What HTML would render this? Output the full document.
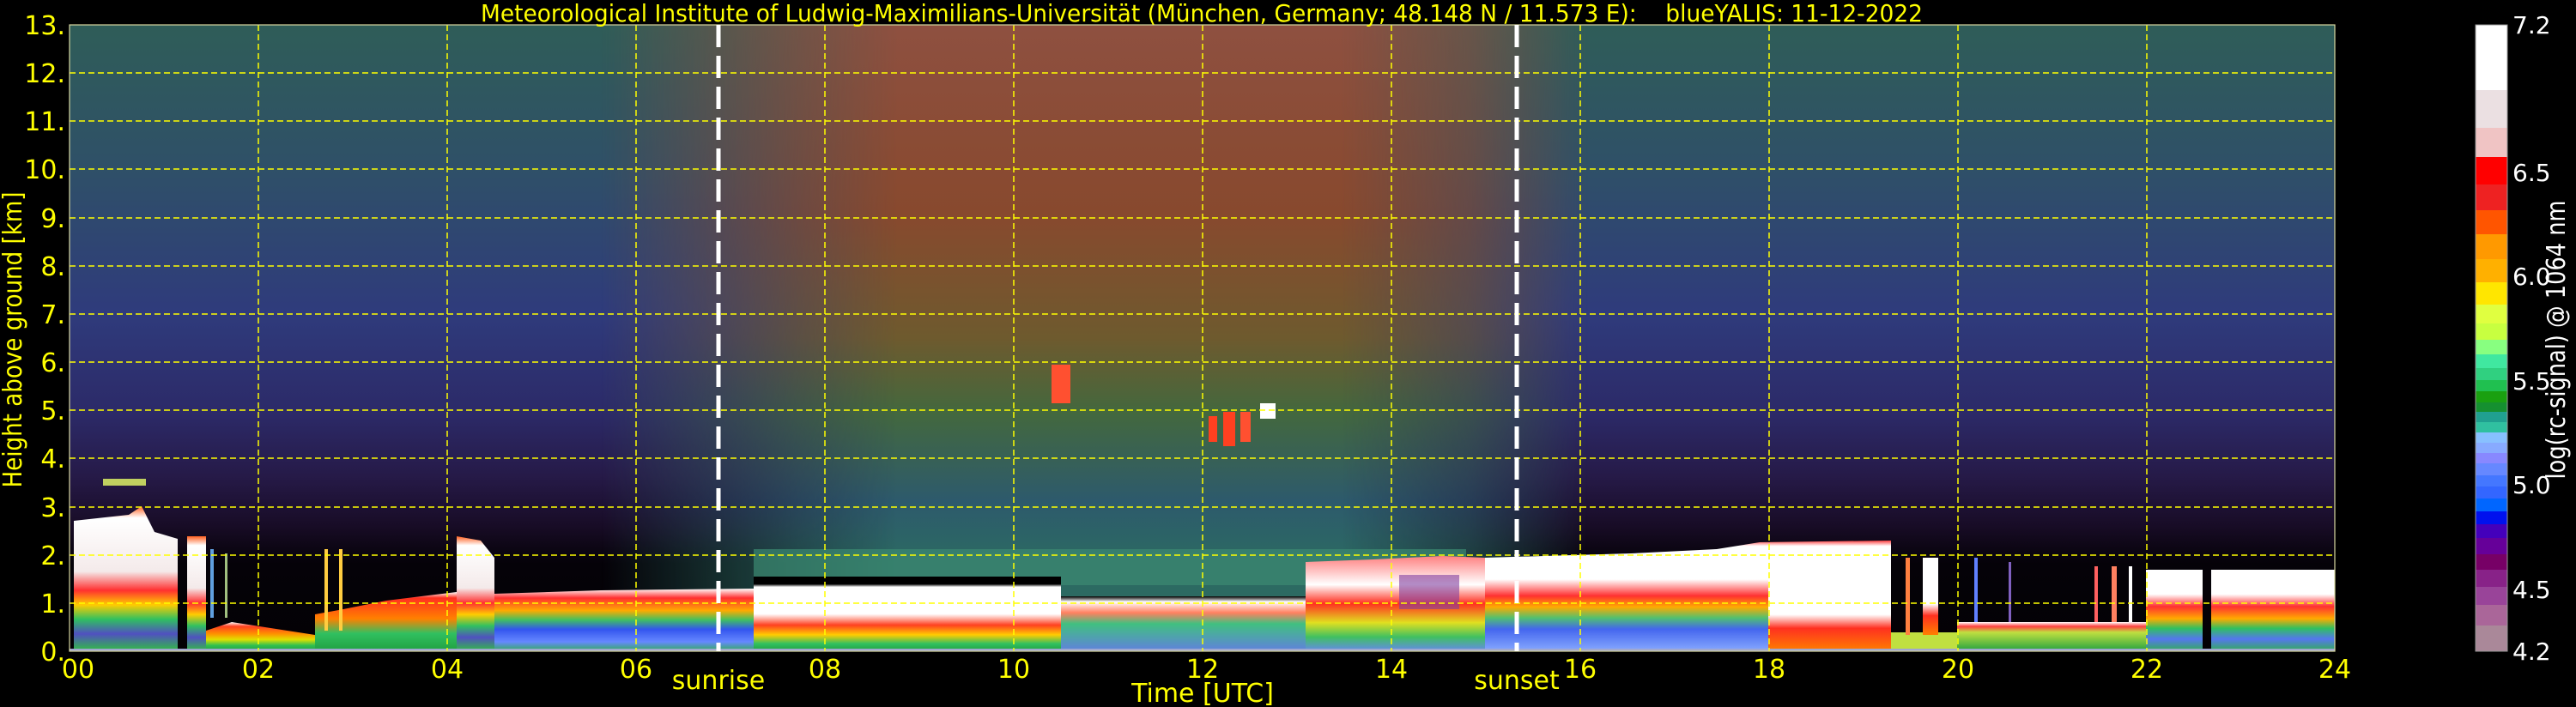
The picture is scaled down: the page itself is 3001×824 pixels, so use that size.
<!DOCTYPE html>
<html><head><meta charset="utf-8"><style>
html,body{margin:0;padding:0;background:#000;}
svg{display:block;}
text{font-family:"DejaVu Sans","Liberation Sans",sans-serif;}
</style></head><body>
<svg width="3001" height="824" viewBox="0 0 3001 824" xmlns="http://www.w3.org/2000/svg">
<defs>
<linearGradient id="night" x1="0" y1="29" x2="0" y2="759" gradientUnits="userSpaceOnUse">
<stop offset="0" stop-color="#2f5d58"/><stop offset="0.23" stop-color="#2f5068"/>
<stop offset="0.46" stop-color="#2f3b7c"/><stop offset="0.62" stop-color="#2c2a68"/>
<stop offset="0.72" stop-color="#261a48"/><stop offset="0.8" stop-color="#180c26"/>
<stop offset="0.86" stop-color="#050208"/><stop offset="1" stop-color="#030104"/>
</linearGradient>
<linearGradient id="day" x1="0" y1="29" x2="0" y2="759" gradientUnits="userSpaceOnUse">
<stop offset="0" stop-color="#8e5040"/><stop offset="0.3" stop-color="#88492e"/>
<stop offset="0.5" stop-color="#6e5a2e"/><stop offset="0.62" stop-color="#43683e"/>
<stop offset="0.76" stop-color="#2d5a6c"/><stop offset="0.86" stop-color="#2c6a62"/>
<stop offset="1" stop-color="#2c6a62"/>
</linearGradient>
<linearGradient id="fade" x1="0" y1="0" x2="1" y2="0">
<stop offset="0" stop-color="#fff" stop-opacity="0"/><stop offset="0.2" stop-color="#fff" stop-opacity="0.7"/>
<stop offset="0.3" stop-color="#fff" stop-opacity="1"/><stop offset="0.75" stop-color="#fff" stop-opacity="1"/>
<stop offset="0.88" stop-color="#fff" stop-opacity="0.6"/><stop offset="1" stop-color="#fff" stop-opacity="0"/>
</linearGradient>
<mask id="dm"><rect x="700" y="29" width="1150" height="730" fill="url(#fade)"/></mask>
<linearGradient id="gCloud" x1="0" y1="0" x2="0" y2="1">
<stop offset="0" stop-color="#ff6020"/><stop offset="0.08" stop-color="#ffffff"/>
<stop offset="0.45" stop-color="#f4eaea"/><stop offset="0.58" stop-color="#ff3030"/>
<stop offset="0.68" stop-color="#ffcc00"/><stop offset="0.78" stop-color="#30c060"/>
<stop offset="0.88" stop-color="#5050c0"/><stop offset="1" stop-color="#30c040"/>
</linearGradient>
<linearGradient id="gLow" x1="0" y1="0" x2="0" y2="1">
<stop offset="0" stop-color="#ffffff"/><stop offset="0.15" stop-color="#ff4020"/>
<stop offset="0.4" stop-color="#ff9000"/><stop offset="0.6" stop-color="#e0e000"/>
<stop offset="0.8" stop-color="#30c050"/><stop offset="1" stop-color="#20a040"/>
</linearGradient>
<linearGradient id="gMid" x1="0" y1="0" x2="0" y2="1">
<stop offset="0" stop-color="#ffffff"/><stop offset="0.1" stop-color="#ff3020"/>
<stop offset="0.45" stop-color="#ff8000"/><stop offset="0.7" stop-color="#30c060"/>
<stop offset="1" stop-color="#20a040"/>
</linearGradient>
<linearGradient id="gNight" x1="0" y1="0" x2="0" y2="1">
<stop offset="0" stop-color="#ffffff"/><stop offset="0.15" stop-color="#ff3030"/>
<stop offset="0.35" stop-color="#ffaa00"/><stop offset="0.5" stop-color="#40c060"/>
<stop offset="0.65" stop-color="#3355ee"/><stop offset="0.85" stop-color="#6688ff"/>
<stop offset="1" stop-color="#30b050"/>
</linearGradient>
<linearGradient id="gDay" x1="0" y1="0" x2="0" y2="1">
<stop offset="0" stop-color="#000"/><stop offset="0.1" stop-color="#000"/><stop offset="0.14" stop-color="#fff"/>
<stop offset="0.5" stop-color="#fff"/><stop offset="0.65" stop-color="#ff4020"/>
<stop offset="0.78" stop-color="#ffcc00"/><stop offset="0.9" stop-color="#30c060"/>
<stop offset="1" stop-color="#20a040"/>
</linearGradient>
<linearGradient id="gNoon" x1="0" y1="0" x2="0" y2="1">
<stop offset="0" stop-color="#000"/><stop offset="0.1" stop-color="#fff"/>
<stop offset="0.3" stop-color="#ff8060"/><stop offset="0.5" stop-color="#40c080"/>
<stop offset="1" stop-color="#6080e0"/>
</linearGradient>
<linearGradient id="gAft" x1="0" y1="0" x2="0" y2="1">
<stop offset="0" stop-color="#ff8080"/><stop offset="0.3" stop-color="#ffffff"/>
<stop offset="0.5" stop-color="#ff3020"/><stop offset="0.7" stop-color="#e0e020"/>
<stop offset="0.85" stop-color="#40c060"/><stop offset="1" stop-color="#6688ee"/>
</linearGradient>
<linearGradient id="gEve" x1="0" y1="0" x2="0" y2="1">
<stop offset="0" stop-color="#ff4040"/><stop offset="0.05" stop-color="#fff"/>
<stop offset="0.35" stop-color="#fff"/><stop offset="0.5" stop-color="#ff3030"/>
<stop offset="0.6" stop-color="#ffaa00"/><stop offset="0.7" stop-color="#50c070"/>
<stop offset="0.8" stop-color="#4466ee"/><stop offset="1" stop-color="#88aaff"/>
</linearGradient>
<linearGradient id="gEve2" x1="0" y1="0" x2="0" y2="1">
<stop offset="0" stop-color="#fff"/><stop offset="0.6" stop-color="#fff"/>
<stop offset="0.75" stop-color="#ff3020"/><stop offset="1" stop-color="#ff8000"/>
</linearGradient>
<linearGradient id="gLate" x1="0" y1="0" x2="0" y2="1">
<stop offset="0" stop-color="#fff"/><stop offset="0.3" stop-color="#fff"/>
<stop offset="0.45" stop-color="#ff3030"/><stop offset="0.6" stop-color="#ffaa00"/>
<stop offset="0.72" stop-color="#30c060"/><stop offset="0.85" stop-color="#5577ee"/>
<stop offset="1" stop-color="#30b050"/>
</linearGradient>
<linearGradient id="gGreen" x1="0" y1="0" x2="0" y2="1">
<stop offset="0" stop-color="#fff"/><stop offset="0.15" stop-color="#ff4040"/>
<stop offset="0.35" stop-color="#c0e040"/><stop offset="1" stop-color="#20a040"/>
</linearGradient>
</defs>

<rect x="81" y="29" width="2639" height="730" fill="url(#night)"/>
<rect x="700" y="29" width="1150" height="730" fill="url(#day)" mask="url(#dm)"/>

<polygon points="86,607 150,600 165,590 180,620 207,628 207,759 86,759" fill="url(#gCloud)"/>
<rect x="218" y="625" width="22" height="134" fill="url(#gCloud)"/>
<polygon points="240,735 270,725 367,740 367,759 240,759" fill="url(#gLow)"/>
<polygon points="367,716 400,710 450,700 532,690 532,759 367,759" fill="url(#gMid)"/>
<polygon points="532,625 560,630 576,650 576,759 532,759" fill="url(#gCloud)"/>
<polygon points="576,692 700,688 878,686 878,759 576,759" fill="url(#gNight)"/>
<rect x="878" y="640" width="830" height="42" fill="#3c8a72" opacity="0.7"/>
<rect x="878" y="672" width="358" height="87" fill="url(#gDay)"/>
<rect x="1236" y="695" width="285" height="64" fill="url(#gNoon)"/>
<polygon points="1521,655 1600,652 1680,648 1730,650 1730,759 1521,759" fill="url(#gAft)"/>
<rect x="1630" y="670" width="70" height="40" fill="#8040a0" opacity="0.6"/>
<polygon points="1730,650 1900,645 2000,640 2050,632 2203,630 2203,759 1730,759" fill="url(#gEve)"/>
<rect x="2060" y="652" width="143" height="107" fill="url(#gEve2)"/>
<rect x="2203" y="737" width="77" height="22" fill="#c0e040"/>
<rect x="2280" y="725" width="220" height="34" fill="url(#gGreen)"/>
<rect x="2500" y="664" width="66" height="95" fill="url(#gLate)"/>
<rect x="2576" y="664" width="144" height="95" fill="url(#gLate)"/>
<rect x="245" y="640" width="4" height="80" fill="#60a0e0"/>
<rect x="262" y="645" width="3" height="75" fill="#a0c080"/>
<rect x="378" y="640" width="4" height="95" fill="#ffcc40"/>
<rect x="395" y="640" width="4" height="95" fill="#ffcc40"/>
<rect x="2220" y="650" width="5" height="90" fill="#ff8040"/>
<rect x="2240" y="650" width="18" height="90" fill="url(#gEve2)"/>
<rect x="2300" y="650" width="4" height="75" fill="#6080ff"/>
<rect x="2340" y="655" width="3" height="70" fill="#8060c0"/>
<rect x="2440" y="660" width="4" height="65" fill="#ff6060"/>
<rect x="2460" y="660" width="6" height="65" fill="#ff8060"/>
<rect x="2480" y="660" width="4" height="65" fill="#ffffff"/>
<rect x="120" y="558" width="50" height="8" fill="#c0d060"/>
<rect x="1225" y="425" width="22" height="45" fill="#ff5030"/>
<rect x="1408" y="485" width="10" height="30" fill="#ff4020"/>
<rect x="1425" y="480" width="14" height="40" fill="#ff4020"/>
<rect x="1445" y="480" width="12" height="35" fill="#ff5030"/>
<rect x="1468" y="470" width="18" height="18" fill="#ffffff"/>
<rect x="81" y="756" width="2639" height="3" fill="#a0a8d0"/>

<g stroke="#ffff00" stroke-width="1.5" stroke-dasharray="7,4" fill="none">
<path d="M81 703H2720M81 647H2720M81 591H2720M81 534H2720M81 478H2720M81 422H2720M81 366H2720M81 310H2720M81 254H2720M81 197H2720M81 141H2720M81 85H2720"/>
<path d="M301 29V759M521 29V759M741 29V759M961 29V759M1181 29V759M1401 29V759M1621 29V759M1841 29V759M2061 29V759M2281 29V759M2501 29V759"/>
</g>
<rect x="81" y="29" width="2639" height="730" fill="none" stroke="#d8d8a0" stroke-width="1.2"/>
<g stroke="#fff" stroke-width="5" stroke-dasharray="26,10">
<line x1="837" y1="29" x2="837" y2="759"/>
<line x1="1767" y1="29" x2="1767" y2="759"/>
</g>

<text x="560" y="25" font-size="28" fill="#ffff00" textLength="1680" lengthAdjust="spacingAndGlyphs" xml:space="preserve">Meteorological Institute of Ludwig-Maximilians-Universität (München, Germany; 48.148 N / 11.573 E):    blueYALIS: 11-12-2022</text>

<g font-size="30" fill="#ffff00" text-anchor="end">
<text x="76" y="770">0.</text><text x="76" y="714">1.</text><text x="76" y="658">2.</text>
<text x="76" y="602">3.</text><text x="76" y="545">4.</text><text x="76" y="489">5.</text>
<text x="76" y="433">6.</text><text x="76" y="377">7.</text><text x="76" y="321">8.</text>
<text x="76" y="265">9.</text><text x="76" y="208">10.</text><text x="76" y="152">11.</text>
<text x="76" y="96">12.</text><text x="76" y="40">13.</text>
</g>
<text transform="translate(25,396) rotate(-90)" font-size="30" fill="#ffff00" text-anchor="middle" textLength="345" lengthAdjust="spacingAndGlyphs">Height above ground [km]</text>

<g font-size="30" fill="#ffff00" text-anchor="middle">
<text x="91" y="790">00</text><text x="301" y="790">02</text><text x="521" y="790">04</text>
<text x="741" y="790">06</text><text x="961" y="790">08</text><text x="1181" y="790">10</text>
<text x="1401" y="790">12</text><text x="1621" y="790">14</text><text x="1841" y="790">16</text>
<text x="2061" y="790">18</text><text x="2281" y="790">20</text><text x="2501" y="790">22</text>
<text x="2720" y="790">24</text>
<text x="837" y="803">sunrise</text><text x="1767" y="803">sunset</text>
<text x="1401" y="818">Time [UTC]</text>
</g>

<g>
<rect x="2884" y="29" width="37" height="76" fill="#ffffff"/>
<rect x="2884" y="105" width="37" height="44" fill="#ebe0e2"/>
<rect x="2884" y="149" width="37" height="34" fill="#f0c4c4"/>
<rect x="2884" y="183" width="37" height="32" fill="#ff0000"/>
<rect x="2884" y="215" width="37" height="30" fill="#ee2222"/>
<rect x="2884" y="245" width="37" height="28" fill="#ff5500"/>
<rect x="2884" y="273" width="37" height="29" fill="#ff9900"/>
<rect x="2884" y="302" width="37" height="27" fill="#ffb000"/>
<rect x="2884" y="329" width="37" height="26" fill="#ffe600"/>
<rect x="2884" y="355" width="37" height="22" fill="#e0ff40"/>
<rect x="2884" y="377" width="37" height="19" fill="#c8ff40"/>
<rect x="2884" y="396" width="37" height="17" fill="#88ff80"/>
<rect x="2884" y="413" width="37" height="16" fill="#40e8a0"/>
<rect x="2884" y="429" width="37" height="14" fill="#30d080"/>
<rect x="2884" y="443" width="37" height="13" fill="#20c050"/>
<rect x="2884" y="456" width="37" height="13" fill="#1aa010"/>
<rect x="2884" y="469" width="37" height="11" fill="#159030"/>
<rect x="2884" y="480" width="37" height="12" fill="#20a090"/>
<rect x="2884" y="492" width="37" height="12" fill="#30c0a0"/>
<rect x="2884" y="504" width="37" height="12" fill="#88c0ff"/>
<rect x="2884" y="516" width="37" height="12" fill="#88aaff"/>
<rect x="2884" y="528" width="37" height="12" fill="#8888ff"/>
<rect x="2884" y="540" width="37" height="14" fill="#6688ff"/>
<rect x="2884" y="554" width="37" height="13" fill="#4477ff"/>
<rect x="2884" y="567" width="37" height="14" fill="#3366ff"/>
<rect x="2884" y="581" width="37" height="15" fill="#0066ff"/>
<rect x="2884" y="596" width="37" height="15" fill="#0011ee"/>
<rect x="2884" y="611" width="37" height="16" fill="#4400bb"/>
<rect x="2884" y="627" width="37" height="19" fill="#660099"/>
<rect x="2884" y="646" width="37" height="18" fill="#770066"/>
<rect x="2884" y="664" width="37" height="20" fill="#882288"/>
<rect x="2884" y="684" width="37" height="21" fill="#994499"/>
<rect x="2884" y="705" width="37" height="24" fill="#aa6699"/>
<rect x="2884" y="729" width="37" height="30" fill="#aa8899"/>
<rect x="2884" y="29" width="37" height="730" fill="none" stroke="#999" stroke-width="1"/>
</g>
<g font-size="28" fill="#ffffff">
<text x="2927" y="39">7.2</text><text x="2927" y="211">6.5</text><text x="2927" y="332">6.0</text>
<text x="2927" y="454">5.5</text><text x="2927" y="575">5.0</text><text x="2927" y="697">4.5</text>
<text x="2927" y="769">4.2</text>
</g>
<text transform="translate(2988,396) rotate(-90)" font-size="30" fill="#ffffff" text-anchor="middle" textLength="325" lengthAdjust="spacingAndGlyphs">log(rc-signal) @ 1064 nm</text>
</svg>
</body></html>
